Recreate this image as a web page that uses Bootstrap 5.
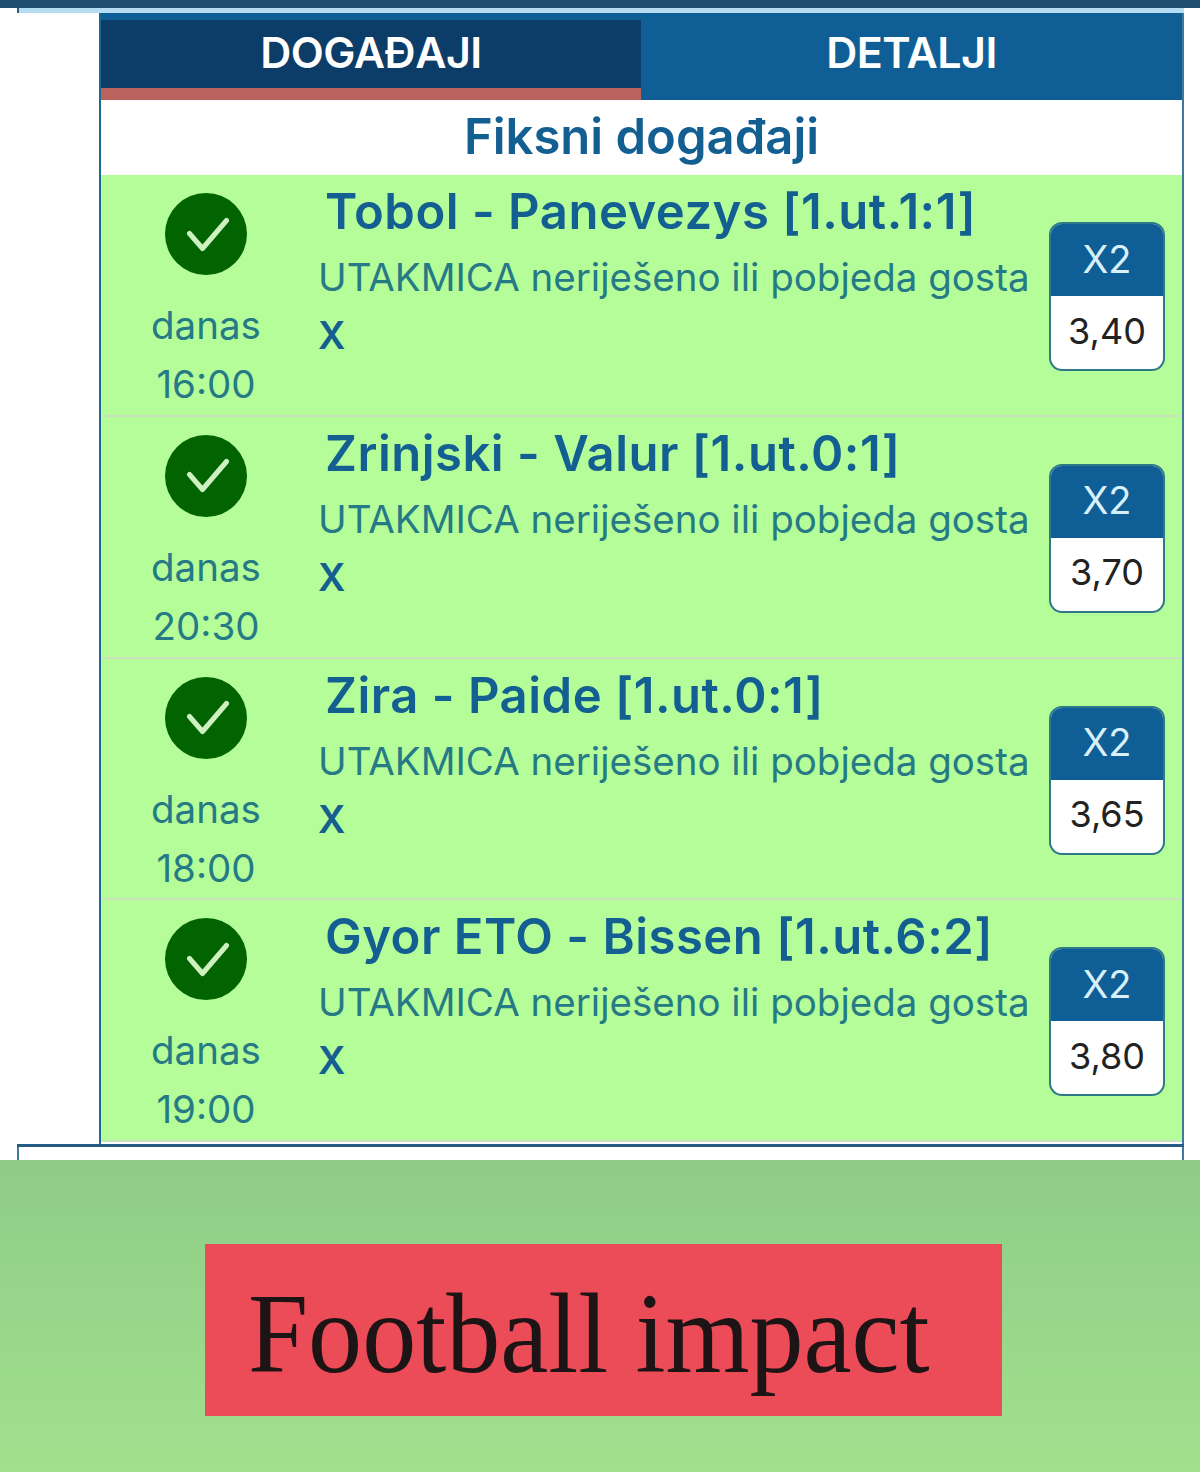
<!DOCTYPE html>
<html lang="en">
<head>
  <meta charset="UTF-8" />
  <title>Fiksni događaji</title>
  <link href="https://cdn.jsdelivr.net/npm/bootstrap@5.3.0/dist/css/bootstrap.min.css" rel="stylesheet">
  <style>
    body { background: #fff; width: 1200px; height: 1472px; overflow: hidden; font-family: Inter, "Noto Sans", sans-serif; }
    .top-strip { height: 8px; background: #1f4f70; }
    .outer-frame { height: 1152px; margin: 0 16px 0 17px; }
    .top-line { height: 5px; background: #b5dcf2; border-left: 2px solid #2c5f80; }
    .panel { margin-left: 82px; height: 1131px; border-left: 2px solid #1b6a94; border-right: 2px solid #3f7a9c; }
    .tab-bar { height: 87px; background: #0f5f96; color: #fff; font-size: 43px; font-weight: 600; }
    .tab-item { flex: 1; display: flex; align-items: center; justify-content: center; padding-bottom: 9px; }
    .tab-active { flex: 0 0 540px; margin-top: 7px; padding-bottom: 4px; background: #0c3c68; border-bottom: 12px solid #b9625e; }
    .tab-text { letter-spacing: -.5px; }
    .panel-title { height: 75px; padding-bottom: 2px; color: #145f92; font-size: 49px; font-weight: 600; }
    .event-row { height: 241.75px; background: #b5fd98; border-bottom: 2px solid #c9e4bd; color: #257a86; }
    .time-col { width: 210px; padding-top: 18px; font-size: 38.5px; line-height: 59px; }
    .check-dot { width: 82px; height: 82px; background: #026400; border-radius: 50%; margin-bottom: 21px; }
    .info-col { width: 738px; flex: none; padding-left: 7px; padding-top: 6px; }
    .event-name { color: #145f92; font-size: 49px; font-weight: 600; line-height: 62px; padding-left: 7px; letter-spacing: .5px; white-space: nowrap; }
    .event-bet { font-size: 38.5px; line-height: 58px; margin-top: 5px; white-space: nowrap; }
    .event-pick { font-size: 38px; font-weight: 600; line-height: 58px; color: #155f90; }
    .odd-box { width: 116px; height: 149px; margin-top: 47px; border: 2px solid #2f7a88; border-radius: 13px; overflow: hidden; font-size: 38px; background: #fff; }
    .odd-name { height: 72px; padding-bottom: 2px; background: #0f5f96; color: #d8f0fa; }
    .odd-value { height: 73px; padding-bottom: 4px; color: #222; font-size: 36px; }
    .bottom-rule { height: 3px; background: #245c86; }
    .frame-foot { height: 13px; border-left: 2px solid #3f7a9c; border-right: 2px solid #3f7a9c; }
    .promo-band { height: 312px; padding: 84px 0 0 205px; background: linear-gradient(#8ecc88, #a1e18d); }
    .promo-box { width: 797px; height: 172px; padding-top: 8px; background: #ec4b58; color: #1d1416; font-family: "Liberation Serif", serif; font-size: 115px; overflow: hidden; }
    .promo-text { display: inline-block; transform: scaleX(.94); transform-origin: left center; margin-left: 43px; white-space: nowrap; }
  </style>
</head>
<body>
  <div class="top-strip"></div>
  <div class="outer-frame">
    <div class="top-line"></div>
    <div class="panel">
      <div class="tab-bar d-flex">
        <div class="tab-item tab-active"><span class="tab-text">DOGAĐAJI</span></div>
        <div class="tab-item"><span class="tab-text">DETALJI</span></div>
      </div>
      <div class="panel-title d-flex align-items-center justify-content-center bg-white">Fiksni događaji</div>

      <div class="event-row d-flex">
        <div class="time-col d-flex flex-column align-items-center">
          <div class="check-dot d-flex align-items-center justify-content-center">
            <svg width="47" height="37" viewBox="0 0 47 37" fill="none"><path d="M6.5 17.5 L19.5 32.5 L43.5 4.5" stroke="#cdf2c0" stroke-width="5" stroke-linecap="round" stroke-linejoin="round"/></svg>
          </div>
          <div>danas</div><div>16:00</div>
        </div>
        <div class="info-col">
          <div class="event-name">Tobol - Panevezys [1.ut.1:1]</div>
          <div class="event-bet">UTAKMICA neriješeno ili pobjeda gosta</div>
          <div class="event-pick">X</div>
        </div>
        <div class="odd-box text-center">
          <div class="odd-name d-flex align-items-center justify-content-center">X2</div>
          <div class="odd-value d-flex align-items-center justify-content-center">3,40</div>
        </div>
      </div>

      <div class="event-row d-flex">
        <div class="time-col d-flex flex-column align-items-center">
          <div class="check-dot d-flex align-items-center justify-content-center">
            <svg width="47" height="37" viewBox="0 0 47 37" fill="none"><path d="M6.5 17.5 L19.5 32.5 L43.5 4.5" stroke="#cdf2c0" stroke-width="5" stroke-linecap="round" stroke-linejoin="round"/></svg>
          </div>
          <div>danas</div><div>20:30</div>
        </div>
        <div class="info-col">
          <div class="event-name">Zrinjski - Valur [1.ut.0:1]</div>
          <div class="event-bet">UTAKMICA neriješeno ili pobjeda gosta</div>
          <div class="event-pick">X</div>
        </div>
        <div class="odd-box text-center">
          <div class="odd-name d-flex align-items-center justify-content-center">X2</div>
          <div class="odd-value d-flex align-items-center justify-content-center">3,70</div>
        </div>
      </div>

      <div class="event-row d-flex">
        <div class="time-col d-flex flex-column align-items-center">
          <div class="check-dot d-flex align-items-center justify-content-center">
            <svg width="47" height="37" viewBox="0 0 47 37" fill="none"><path d="M6.5 17.5 L19.5 32.5 L43.5 4.5" stroke="#cdf2c0" stroke-width="5" stroke-linecap="round" stroke-linejoin="round"/></svg>
          </div>
          <div>danas</div><div>18:00</div>
        </div>
        <div class="info-col">
          <div class="event-name">Zira - Paide [1.ut.0:1]</div>
          <div class="event-bet">UTAKMICA neriješeno ili pobjeda gosta</div>
          <div class="event-pick">X</div>
        </div>
        <div class="odd-box text-center">
          <div class="odd-name d-flex align-items-center justify-content-center">X2</div>
          <div class="odd-value d-flex align-items-center justify-content-center">3,65</div>
        </div>
      </div>

      <div class="event-row d-flex">
        <div class="time-col d-flex flex-column align-items-center">
          <div class="check-dot d-flex align-items-center justify-content-center">
            <svg width="47" height="37" viewBox="0 0 47 37" fill="none"><path d="M6.5 17.5 L19.5 32.5 L43.5 4.5" stroke="#cdf2c0" stroke-width="5" stroke-linecap="round" stroke-linejoin="round"/></svg>
          </div>
          <div>danas</div><div>19:00</div>
        </div>
        <div class="info-col">
          <div class="event-name">Gyor ETO - Bissen [1.ut.6:2]</div>
          <div class="event-bet">UTAKMICA neriješeno ili pobjeda gosta</div>
          <div class="event-pick">X</div>
        </div>
        <div class="odd-box text-center">
          <div class="odd-name d-flex align-items-center justify-content-center">X2</div>
          <div class="odd-value d-flex align-items-center justify-content-center">3,80</div>
        </div>
      </div>
    </div>
    <div class="bottom-rule"></div>
    <div class="frame-foot"></div>
  </div>
  <div class="promo-band">
    <div class="promo-box d-flex align-items-center"><span class="promo-text">Football impact</span></div>
  </div>
  <script src="https://cdn.jsdelivr.net/npm/bootstrap@5.3.0/dist/js/bootstrap.bundle.min.js"></script>
</body>
</html>
